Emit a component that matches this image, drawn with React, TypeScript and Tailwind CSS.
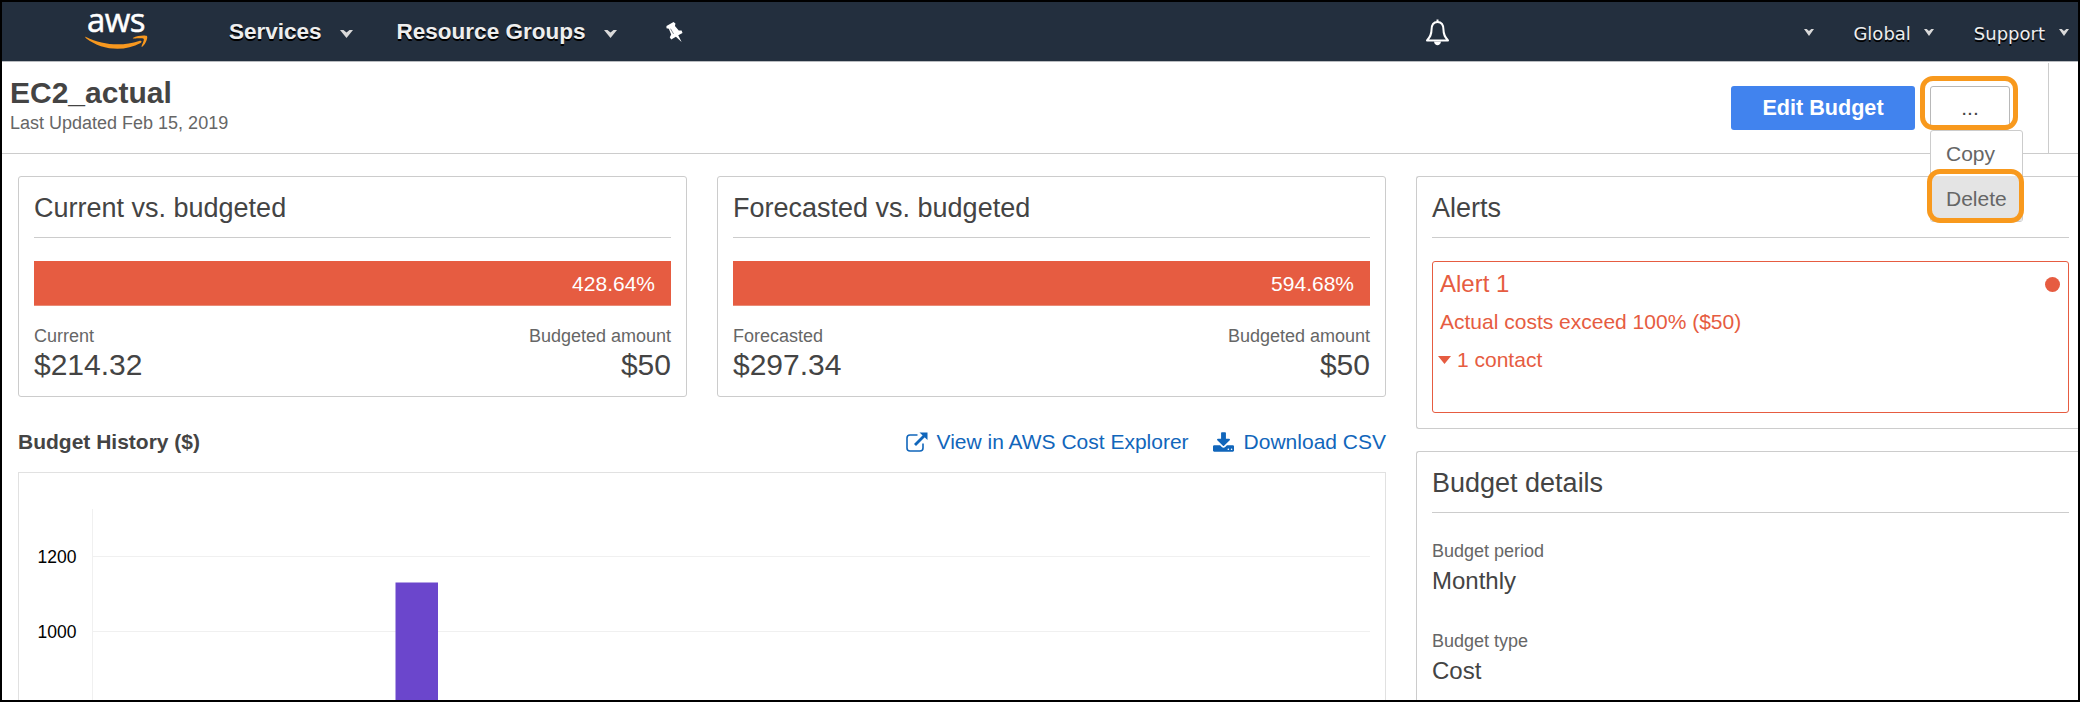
import React from "react";

function Caret({ className = "" }: { className?: string }) {
  return (
    <svg className={className} viewBox="0 0 12 8" preserveAspectRatio="none" fill="#d9d9d9">
      <path d="M0 0 L3.200 0 L6 2.400 L8.800 0 L12 0 L6 8 Z" />
    </svg>
  );
}

function AwsLogo() {
  return (
    <div className="ml-[82px] flex h-[59px] w-[64px] shrink-0 flex-col items-center">
      <span className="h-[33px] font-['Open_Sans',sans-serif] text-[33px] leading-[35px] font-medium tracking-[-0.5px] text-white [-webkit-text-stroke:0.5px_#fff]">aws</span>
      <svg className="h-[15px] w-[63px] shrink-0" viewBox="0 0 64 19" preserveAspectRatio="none" fill="#f7981f">
        <path d="M1 2.5 C18 13 38 14.500 55 7.500 C57 6.600 58.500 8.400 56.500 10 C40 21.500 17 19.500 1 4 C0 3 0 2 1 2.500 Z" />
        <path d="M49 3.500 C53 0.500 62 0 63 1.500 C64 3 62 11 58.500 14.500 C57.500 15.300 57 15 57.500 14 C58.500 11 60.500 6 59.500 4.800 C58.500 3.700 53 4.200 49.800 4.500 C48.500 4.600 48.200 4 49 3.500 Z" />
      </svg>
    </div>
  );
}

function TopBar() {
  return (
    <header className="flex h-[60px] shrink-0 border-b border-[#b9bcc0] bg-[#232f3e] text-[#eee]">
      <AwsLogo />
      <nav className="flex h-[59px] shrink-0 items-center pl-[81px] text-[22.500px] font-bold [text-shadow:0_1.500px_0_#000]">
        <span className="leading-[56px]">Services</span>
        <Caret className="mt-[4px] ml-[18px] h-2 w-[13px]" />
        <span className="ml-[44px] leading-[56px]">Resource Groups</span>
        <Caret className="mt-[4px] ml-[19px] h-2 w-[13px]" />
      </nav>
      <svg className="mt-[20px] ml-[49px] h-[21px] w-[17px]" viewBox="0 0 18 22" fill="#fff">
        <path d="M0.500 4 L8 0 L10 1.500 L9.500 4 L13.500 9 L16.500 9 L17.500 11.500 L13 14 L16.500 21 L10.500 15.500 L5.500 18.500 L4 16 L5.500 13 L3 7 L0.500 6.500 Z" />
        <path d="M4.800 7 L8 12.500" stroke="#7d848c" strokeWidth="1" />
      </svg>
      <svg className="mt-[17px] ml-[742px] h-[27px] w-[25px]" viewBox="0 0 25 27" fill="none" stroke="#fff" strokeWidth="2">
        <path d="M12.500 3 C8 3 6.500 7 6.500 11 C6.500 16 5 18 2 21.500 H23 C20 18 18.500 16 18.500 11 C18.500 7 17 3 12.500 3 Z" strokeLinejoin="round" />
        <path d="M12.500 0.500 V3" />
        <path d="M9 22.500 C9.500 27.500 15.500 27.500 16 22.500 Z" fill="#fff" stroke="none" />
      </svg>
      <div className="mr-[9px] ml-auto flex h-[59px] items-center pt-1 font-['DejaVu_Sans',Verdana,sans-serif] text-[18px] [text-shadow:0_1.500px_0_#000]">
        <Caret className="-mt-[2px] h-[7px] w-[10px]" />
        <span className="ml-[39px]">Global</span>
        <Caret className="-mt-[2px] ml-[13px] h-[7px] w-[10px]" />
        <span className="ml-[40px]">Support</span>
        <Caret className="-mt-[2px] ml-[14px] h-[7px] w-[10px]" />
      </div>
    </header>
  );
}

function PageHeader() {
  return (
    <div className="flex h-[92px] shrink-0 border-b border-[#ccc]">
      <div className="pt-[13px] pl-2">
        <h1 className="text-[30px] leading-[36px] font-bold">EC2_actual</h1>
        <p className="text-[18px] leading-[24px] text-[#666]">Last Updated Feb 15, 2019</p>
      </div>
      <div className="mt-6 ml-auto flex items-start gap-[15px]">
        <button className="h-11 w-[184px] rounded-[3px] bg-[#4183ee] text-[21.600px] font-bold text-white">Edit Budget</button>
        <div className="relative h-11 w-20">
          <button className="h-11 w-20 rounded-[3px] border border-[#b8b8b8] text-[21px]">...</button>
          <div className="absolute top-11 left-0 z-10 h-[92px] w-[93px] rounded-[3px] border border-[#ccc] bg-white text-[21px] text-[#666]">
            <div className="h-[45px] pl-[15px] leading-[46px]">Copy</div>
            <div className="h-[45px] bg-[#e4e4e4] pl-[15px] leading-[45px]">Delete</div>
          </div>
          <div className="absolute -top-[10px] -left-[10px] z-20 h-[54px] w-[98px] rounded-[13px] border-[5px] border-[#f8991d]" />
          <div className="absolute top-[83px] -left-[3px] z-20 h-[54px] w-[97px] rounded-[13px] border-[5px] border-[#f8991d]" />
        </div>
      </div>
      <div className="mt-px ml-[38px] w-[30px] border-l border-[#ccc]" />
    </div>
  );
}

function CardTitle({ children }: { children: React.ReactNode }) {
  return <h2 className="h-[61px] border-b border-[#ccc] pt-[14px] text-[27px] leading-[34px]">{children}</h2>;
}

function SummaryCard({ title, percent, label, value }: { title: string; percent: string; label: string; value: string }) {
  return (
    <section className="h-[221px] w-[669px] rounded-[3px] border border-[#ccc] px-[15px]">
      <CardTitle>{title}</CardTitle>
      <div className="mt-[23px] h-[45px] border-b border-[#e98b76] bg-[#e65c41] pr-4 text-right text-[21px] leading-[45px] text-white">
        {percent}
      </div>
      <div className="mt-[19px] flex justify-between text-[18px] leading-[22px] text-[#666]">
        <span>{label}</span>
        <span>Budgeted amount</span>
      </div>
      <div className="flex justify-between text-[30px] leading-[36px]">
        <span>{value}</span>
        <span>$50</span>
      </div>
    </section>
  );
}

function Chart() {
  return (
    <div className="mt-[16px] h-[229px] w-[1368px] border border-b-0 border-[#e1e1e1]">
      <svg className="block h-[228px] w-[1366px]" viewBox="0 0 1366 228">
        <g fill="#f0f0f0">
          <rect x="73" y="36" width="1" height="192" />
          <rect x="73" y="83" width="1278" height="1" />
          <rect x="73" y="158" width="1278" height="1" />
        </g>
        <rect x="376.500" y="109.500" width="42.500" height="120" fill="#6b46cc" />
        <g fontSize="17.500" fill="#000" textAnchor="end" fontFamily="Liberation Sans, sans-serif">
          <text x="57.500" y="90">1200</text>
          <text x="57.500" y="165">1000</text>
        </g>
      </svg>
    </div>
  );
}

export default function App() {
  return (
    <div className="flex h-[702px] w-[2080px] flex-col overflow-hidden border-2 border-black bg-white font-['Liberation_Sans',Arial,sans-serif] text-[#444]">
      <TopBar />
      <PageHeader />
      <main className="flex pt-[22px] pl-4">
        <div className="w-[1368px]">
          <div className="flex justify-between">
            <SummaryCard title="Current vs. budgeted" percent="428.64%" label="Current" value="$214.32" />
            <SummaryCard title="Forecasted vs. budgeted" percent="594.68%" label="Forecasted" value="$297.34" />
          </div>
          <div className="mt-[31px] flex h-7 items-center text-[21px]">
            <h3 className="font-bold">Budget History ($)</h3>
            <a className="ml-auto flex items-center text-[#1166bb]">
              <svg className="mr-[9px] h-[20px] w-[22px]" viewBox="0 0 22 20" fill="none" stroke="currentColor">
                <path d="M11.500 3 H4 Q1 3 1 6 V16 Q1 19 4 19 H14 Q17 19 17 16 V11.500" strokeWidth="1.600" />
                <path d="M9 13 L18 4" strokeWidth="2.800" />
                <path d="M13.500 0.500 H21.500 V8 Z" fill="currentColor" stroke="none" />
              </svg>
              View in AWS Cost Explorer
            </a>
            <a className="ml-6 flex items-center text-[#1166bb]">
              <svg className="mr-[10px] h-[20px] w-[21px]" viewBox="64 0 1664 1536" fill="currentColor">
                <path d="M1344 1344q0-26-19-45t-45-19-45 19-19 45 19 45 45 19 45-19 19-45zm256 0q0-26-19-45t-45-19-45 19-19 45 19 45 45 19 45-19 19-45zm128-224v320q0 40-28 68t-68 28h-1472q-40 0-68-28t-28-68v-320q0-40 28-68t68-28h465l135 136q58 56 136 56t136-56l136-136h464q40 0 68 28t28 68zm-325-569q17 41-14 70l-448 448q-18 19-45 19t-45-19l-448-448q-31-29-14-70 17-39 59-39h256v-448q0-26 19-45t45-19h256q26 0 45 19t19 45v448h256q42 0 59 39z" />
              </svg>
              Download CSV
            </a>
          </div>
          <Chart />
        </div>
        <div className="ml-[30px] w-[664px] shrink-0">
          <section className="h-[253px] rounded-l-[3px] border border-r-0 border-[#ccc] pr-[11px] pl-[15px]">
            <CardTitle>Alerts</CardTitle>
            <div className="mt-[23px] h-[152px] rounded-[3px] border border-[#e65c41] px-[7px] text-[21px] text-[#e65c41]">
              <div className="flex items-center justify-between pt-[4px] pr-px">
                <span className="text-[24px] leading-[35px]">Alert 1</span>
                <i className="mt-px size-[15px] rounded-full bg-[#e65c41]" />
              </div>
              <p className="pt-px leading-[39px]">Actual costs exceed 100% ($50)</p>
              <p className="-ml-[2px] flex items-center leading-[38px]">
                <svg className="mr-[6px] h-[8px] w-[13px]" viewBox="0 0 13 8" fill="currentColor"><path d="M0 0 H13 L6.500 8 Z" /></svg>
                1 contact
              </p>
            </div>
          </section>
          <section className="mt-[22px] h-[300px] rounded-l-[3px] border border-r-0 border-[#ccc] pr-[11px] pl-[15px]">
            <CardTitle>Budget details</CardTitle>
            <dl className="pt-[26px]">
              <dt className="text-[18px] leading-[24px] text-[#666]">Budget period</dt>
              <dd className="mb-[30px] text-[24px] leading-[36px]">Monthly</dd>
              <dt className="text-[18px] leading-[24px] text-[#666]">Budget type</dt>
              <dd className="text-[24px] leading-[36px]">Cost</dd>
            </dl>
          </section>
        </div>
      </main>
    </div>
  );
}
